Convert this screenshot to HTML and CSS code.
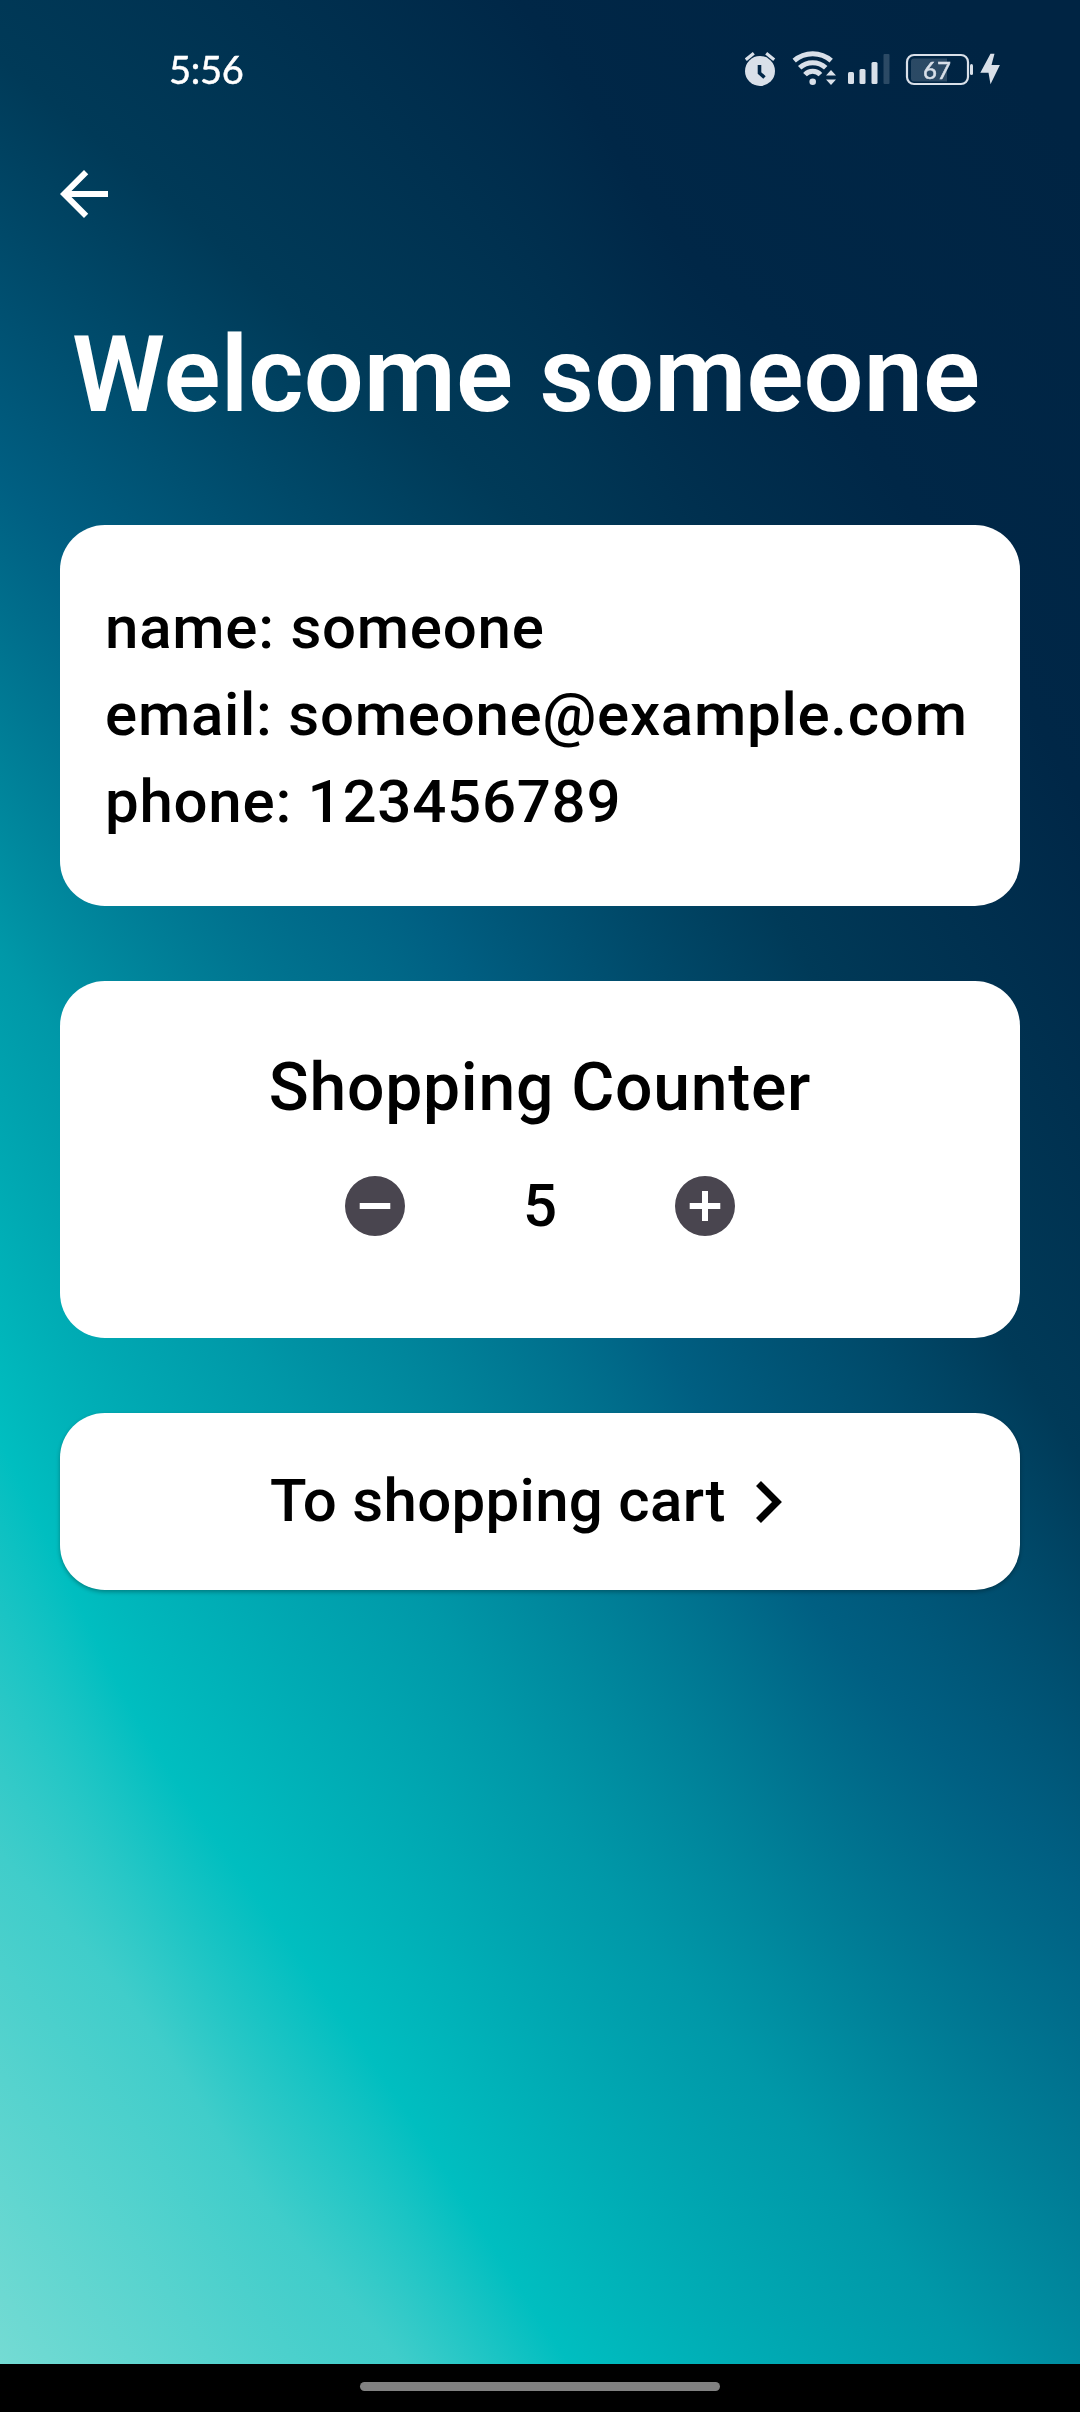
FILE: index.html
```html
<!DOCTYPE html>
<html lang="en">
<head>
<meta charset="utf-8">
<title>Welcome</title>
<link rel="stylesheet" href="styles.css">
</head>
<body>
<div class="screen">
  <canvas class="backdrop" width="1080" height="2364"></canvas>

  <header class="status-bar">
    <span class="clock">5:56</span>
    <svg class="status-icons" viewBox="0 0 264 48" width="264" height="48" fill="#d9e0e9">
      <circle cx="15" cy="29" r="15"/>
      <path d="M.8 17.700l8-6.400M29.200 17.700l-8-6.400" stroke="#d9e0e9" stroke-width="3.200"/>
      <path d="M14.500 23v8l5 4.500" fill="none" stroke="#002647" stroke-width="3.600"/>
      <g fill="none" stroke="#d9e0e9" stroke-width="5">
        <path d="M49.200 18.700A28 28 0 0 1 86.200 18.700"/>
        <path d="M54.700 25.800A19 19 0 0 1 80.700 25.800"/>
        <path d="M60 32.600A10.500 10.500 0 0 1 75.400 32.600"/>
      </g>
      <circle cx="67.700" cy="39.700" r="3.300"/>
      <path d="M81 33.500l5-5.500 5 5.500zM81 37.500h10l-5 5.500z"/>
      <rect x="103" y="30" width="6" height="12" rx="1.500"/>
      <rect x="114.500" y="27" width="6" height="15" rx="1.500"/>
      <rect x="126.500" y="20" width="6" height="22" rx="1.500"/>
      <rect x="138.500" y="12" width="6" height="30" rx="1" opacity=".2"/>
      <rect x="162" y="13" width="61" height="29" rx="7" fill="none" stroke="#d9e0e9" stroke-width="2.200"/>
      <path d="M169 16.500h33v23h-33a3 3 0 0 1-3-3v-17a3 3 0 0 1 3-3z" opacity=".2"/>
      <rect x="225" y="22" width="3" height="11" rx="1.500"/>
      <path d="M245.500 12L235.300 31h8.200L245.500 42.500L254.900 23.300h-8.400L249.500 12z" transform="translate(0,-.2)"/>
      <text x="192" y="36.500" text-anchor="middle" class="battery-level">67</text>
    </svg>
  </header>

  <nav class="top-nav">
    <svg class="back" viewBox="4 4 16 16" width="48" height="48" fill="#fff"><path d="M20 11H7.830l5.590-5.590L12 4l-8 8 8 8 1.410-1.410L7.830 13H20v-2z"/></svg>
  </nav>

  <h1 class="title">Welcome someone</h1>

  <main class="cards">
    <section class="card profile">
      <p>name: someone</p>
      <p>email: someone@example.com</p>
      <p>phone: 123456789</p>
    </section>

    <section class="card counter">
      <h2>Shopping Counter</h2>
      <div class="stepper">
        <svg viewBox="2 2 20 20" width="60" height="60"><path fill="#49454f" d="M12 2a10 10 0 1 0 0 20 10 10 0 0 0 0-20zm5.100 11H6.900v-2h10.200z"/></svg>
        <span class="count">5</span>
        <svg viewBox="2 2 20 20" width="60" height="60"><path fill="#49454f" d="M12 2a10 10 0 1 0 0 20 10 10 0 0 0 0-20zm5.100 11H13v4h-2v-4H6.900v-2H11V7h2v4h4.100z"/></svg>
      </div>
    </section>

    <section class="card cart">
      <span class="cart-label">To shopping cart</span>
      <svg class="chevron" viewBox="0 0 26 42" width="26" height="42" fill="none" stroke="#000" stroke-width="7"><path d="M2.500 2.500l18.500 18.500-18.500 18.500"/></svg>
    </section>
  </main>

  <footer class="gesture-bar"><span class="handle"></span></footer>
</div>
<script src="backdrop.js"></script>
</body>
</html>
```
FILE: styles.css
```css
* { box-sizing: border-box; margin: 0; }

body {
  margin: 0;
  font-family: Roboto, sans-serif;
  font-weight: 500;
  color: #000;
}

.screen {
  position: relative;
  display: flex;
  flex-direction: column;
  width: 1080px;
  height: 2412px;
  overflow: hidden;
  isolation: isolate;
}

.backdrop {
  position: absolute;
  top: 0;
  left: 0;
  z-index: -1;
}

.status-bar {
  display: flex;
  justify-content: space-between;
  height: 140px;
  padding: 42px 71px 0 169px;
}
.clock {
  font: 400 38px/54px Lato, sans-serif;
  letter-spacing: -0.3px;
  color: #fff;
  -webkit-text-stroke: 0.5px #fff;
}
.battery-level {
  font: 400 24px Lato, sans-serif;
  stroke: #d9e0e9;
  stroke-width: 0.5px;
}

.top-nav {
  height: 140px;
  padding: 30px 60px 0;
}
.back { display: block; }

.title {
  height: 245px;
  padding: 33px 0 0 72px;
  font-size: 106px;
  font-weight: 600;
  line-height: 124px;
  letter-spacing: 0.1px;
  color: #fff;
  white-space: nowrap;
}

.cards {
  display: flex;
  flex: 1;
  flex-direction: column;
  gap: 75px;
  padding: 0 60px;
}
.card {
  border-radius: 45px;
  background: #fff;
}

.profile {
  height: 381px;
  padding: 59px 45px;
  font-size: 60px;
  line-height: 87px;
  letter-spacing: 0.75px;
  white-space: nowrap;
}

.counter {
  display: flex;
  flex-direction: column;
  align-items: center;
  height: 357px;
  padding-top: 63px;
}
.counter h2 {
  font-size: 66px;
  font-weight: 500;
  line-height: 87px;
  letter-spacing: 0.75px;
}
.stepper {
  display: flex;
  align-items: center;
  justify-content: space-between;
  width: 390px;
  height: 150px;
}
.count {
  padding-bottom: 2px;
  font-size: 60px;
}

.cart {
  display: flex;
  align-items: center;
  gap: 30px;
  height: 177px;
  padding-left: 210px;
  font-size: 60px;
  letter-spacing: 0.3px;
  box-shadow: 0 2px 4px rgba(0, 0, 0, .3);
}
.cart-label { padding-bottom: 2px; }

.gesture-bar {
  display: flex;
  align-items: center;
  justify-content: center;
  height: 48px;
  background: #000;
}
.handle {
  width: 360px;
  height: 9px;
  margin-top: -3px;
  border-radius: 5px;
  background: #818181;
}
```
FILE: backdrop.js
```javascript
// Curved gradient: every colour follows its own contour, given as the
// height of the contour at evenly spaced columns across the screen.
const STEP = 135;
const TOP = -1000;
const BOTTOM = 4400;
const contours = [
  ['#002443', [-900, -800, -700, -600, -450, -250, -100, 0, 150]],
  ['#002747', [-500, -390, -270, -130, 30, 240, 370, 560, 800]],
  ['#003a58', [60, 170, 290, 410, 540, 750, 970, 1240, 1460]],
  ['#005f82', [480, 610, 750, 890, 1110, 1365, 1600, 1755, 1885]],
  ['#0098a8', [950, 1160, 1380, 1570, 1790, 1980, 2145, 2320, 2500]],
  ['#00bec0', [1440, 1715, 1915, 2110, 2320, 2520, 2720, 2920, 3120]],
  ['#40cdca', [1855, 2010, 2210, 2370, 2570, 2770, 2970, 3170, 3370]],
  ['#78dcd4', [2400, 2600, 2800, 3000, 3200, 3400, 3600, 3800, 4000]]
];

function heightAt(points, x) {
  const i = Math.min(Math.floor(x / STEP), points.length - 2);
  const t = x / STEP - i;
  const b = points[i];
  const c = points[i + 1];
  const a = i > 0 ? points[i - 1] : 2 * b - c;
  const d = i + 2 < points.length ? points[i + 2] : 2 * c - b;
  return b + 0.5 * t * (c - a + t * (2 * a - 5 * b + 4 * c - d + t * (3 * (b - c) + d - a)));
}

const canvas = document.querySelector('.backdrop');
const ctx = canvas.getContext('2d');
for (let x = 0; x < canvas.width; x++) {
  const gradient = ctx.createLinearGradient(0, TOP, 0, BOTTOM);
  for (const [color, points] of contours) {
    gradient.addColorStop((heightAt(points, x) - TOP) / (BOTTOM - TOP), color);
  }
  ctx.fillStyle = gradient;
  ctx.fillRect(x, 0, 1, canvas.height);
}
```
